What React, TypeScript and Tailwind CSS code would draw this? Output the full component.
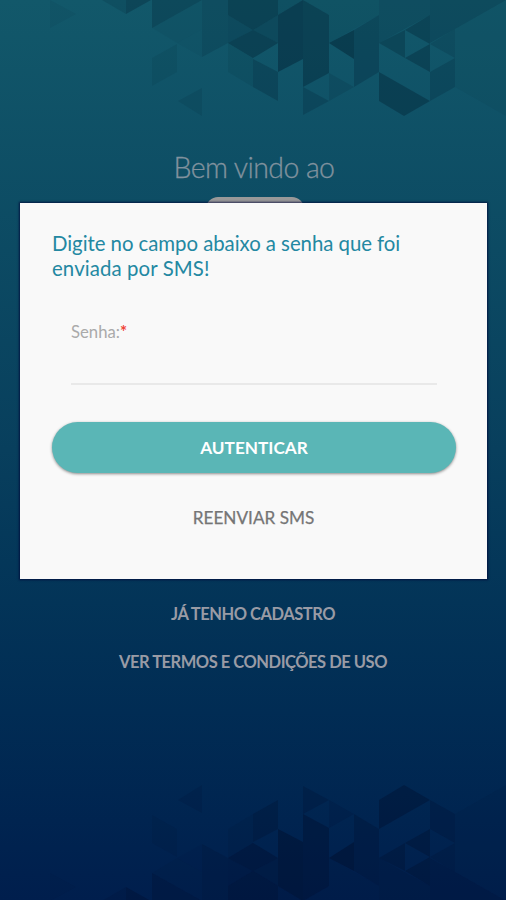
type Facet = [points: string, opacity: number];

// Facets on a 25px triangular grid, drawn as shades over the gradient.
const FACETS: Facet[] = [
  ["50,0 76,14 50,28", 0.05],
  ["102,0 126,14 126,0", 0.14],
  ["126,0 126,14 151,0", 0.28],
  ["152,0 152,28 202,0", 0.23],
  ["152,28 202,0 202,29 177,43", 0.06],
  ["152,58 177,44 177,72 152,86", 0.08],
  ["178,101 202,88 202,116", 0.11],
  ["202,0 228,0 228,43 202,57", 0.16],
  ["177,43 202,29 202,57", 0.04],
  ["228,0 278,0 278,15 253,30 228,15", 0.34],
  ["228,15 253,30 228,43", 0.2],
  ["228,43 253,30 278,43 253,58", 0.34],
  ["253,30 278,15 278,43", 0.22],
  ["228,43 253,58 253,87 228,72", 0.08],
  ["253,59 278,72 278,101 253,87", 0.23],
  ["278,0 303,0 278,15", 0.12],
  ["278,15 303,0 303,59 278,72", 0.4],
  ["303,0 329,15 329,73 303,87", 0.34],
  ["303,0 379,0 379,15 329,43 329,15", 0.08],
  ["329,43 354,30 354,59", 0.42],
  ["354,30 379,15 379,72 354,87", 0.24],
  ["329,73 354,87 329,101", 0.12],
  ["303,87 329,101 303,115", 0.2],
  ["379,0 430,0 430,15 379,43", 0.16],
  ["379,43 405,30 405,58", 0.26],
  ["405,30 430,15 430,44", 0.3],
  ["405,58 430,44 430,72", 0.3],
  ["379,72 430,101 404,116 379,101", 0.34],
  ["430,0 506,0 455,29 430,43", 0.2],
  ["430,44 455,29 455,58", 0.16],
  ["430,72 455,58 455,87 430,101", 0.2],
  ["455,29 506,0 506,116 455,87", 0.06],
];

function Facets({ className }: { className: string }) {
  return (
    <svg viewBox="0 0 506 120" className={className} aria-hidden="true">
      {FACETS.map(([points, opacity]) => (
        <polygon key={points} points={points} fill="currentColor" opacity={opacity} />
      ))}
    </svg>
  );
}

function PasswordDialog() {
  return (
    <section
      role="dialog"
      className="relative ml-px mt-[-6px] h-[376px] w-[467px] bg-[#f9f9f9] px-8 pt-7 shadow-[0_0_2px_1px_rgba(0,5,55,0.75)]"
    >
      <h2 className="text-[20.4px] leading-[25px] text-[#2388a2]">
        <span className="tracking-[-0.05px]">Digite no campo abaixo a senha que foi</span>
        <br />
        <span className="tracking-[0.1px]">enviada por SMS!</span>
      </h2>
      <label className="mr-[18px] ml-[19px] mt-[39px] block h-[65px] border-b-2 border-[#e9e9e9] text-[16.7px] leading-6 text-[#aaa]">
        Senha:<span className="font-bold text-[#f04438]">*</span>
      </label>
      <button className="mt-[37px] block h-[51px] w-[404px] rounded-full bg-[#5ab6b6] text-[17.2px] font-bold text-white shadow-[0_1px_3px_rgba(0,0,0,0.45)]">
        AUTENTICAR
      </button>
      <button className="mx-auto mt-[33px] block text-[17.2px] leading-6 text-[#757575] [-webkit-text-stroke:0.25px_#757575]">
        REENVIAR SMS
      </button>
    </section>
  );
}

export default function App() {
  return (
    <main className="relative flex h-[900px] w-[506px] flex-col items-center overflow-hidden bg-linear-to-b from-[#12586a] via-[#083f5d] via-50% to-[#001e4d] font-[Lato,sans-serif]">
      <Facets className="absolute top-0 left-0 h-[120px] w-[506px] text-[#001a2c]" />
      <Facets className="absolute bottom-[-1px] left-0 h-[120px] w-[506px] -scale-y-100 text-[#000c28]" />
      <h1 className="mt-[147px] ml-[2px] text-[28.5px] leading-10 font-light tracking-[-0.6px] text-[#81929e] [-webkit-text-stroke:0.3px_#81929e]">
        Bem vindo ao
      </h1>
      <div className="mt-[10px] ml-[3px] h-3 w-[98px] rounded-t-[16px] bg-[#999]" />
      <PasswordDialog />
      <nav className="mt-[23px] flex flex-col items-center gap-6 text-[16.5px] leading-6 font-bold tracking-[-0.48px] text-[#999ba5]">
        <a>JÁ TENHO CADASTRO</a>
        <a>VER TERMOS E CONDIÇÕES DE USO</a>
      </nav>
    </main>
  );
}
